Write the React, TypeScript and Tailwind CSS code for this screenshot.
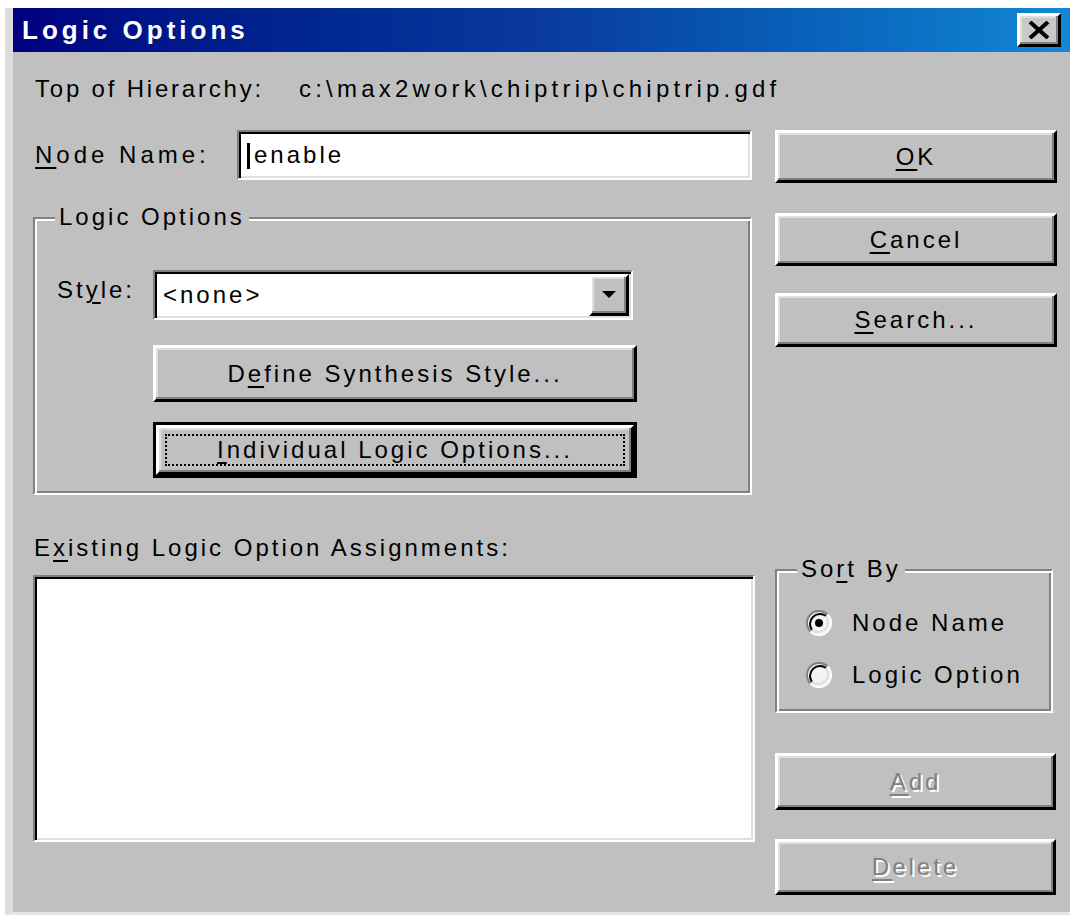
import React from 'react'

// classic 3D bevels
const raised =
    'border-[3px] border-t-white border-l-white border-r-black border-b-black shadow-[inset_-2px_-2px_0_#808080,inset_2px_2px_0_#dfdfdf]'
const sunken =
    'border-[2px] border-t-[#808080] border-l-[#808080] border-r-white border-b-white shadow-[inset_2px_2px_0_#000,inset_-2px_-2px_0_#dfdfdf]'
const etched =
    'border-[2px] border-t-[#808080] border-l-[#808080] border-r-white border-b-white shadow-[inset_2px_2px_0_#fff,inset_-2px_-2px_0_#808080]'

const Key = ({ children }: { children: React.ReactNode }) => (
    <span className="underline decoration-[2px] underline-offset-[4px]">{children}</span>
)

interface ButtonProps {
    children: React.ReactNode
    className?: string
    disabled?: boolean
}

const DialogButton = ({ children, className = '', disabled }: ButtonProps) => (
    <button
        type="button"
        className={`${raised} bg-[#c0c0c0] flex items-center justify-center ${className} ${
            disabled ? 'text-[#808080] [text-shadow:2px_2px_0_#ffffff]' : 'text-black'
        }`}
    >
        {children}
    </button>
)

const GroupBox = ({
    label,
    className = '',
    children,
}: {
    label: React.ReactNode
    className?: string
    children: React.ReactNode
}) => (
    <div className={`relative ${etched} ${className}`}>
        <span className="absolute -top-[15px] left-[20px] bg-[#c0c0c0] px-[4px] leading-[26px]">{label}</span>
        {children}
    </div>
)

const Radio = ({ checked, label }: { checked?: boolean; label: string }) => (
    <div className="flex items-center h-[26px]">
        <svg width="26" height="26" viewBox="0 0 26 26" className="shrink-0">
            <circle cx="13" cy="13" r="11" fill="#f4f4f4" />
            <path d="M4.5 21.5 A12 12 0 0 1 21.5 4.5" stroke="#808080" strokeWidth="2" fill="none" />
            <path d="M6 20 A10 10 0 0 1 20 6" stroke="#000000" strokeWidth="2" fill="none" />
            <path d="M21.5 4.5 A12 12 0 0 1 4.5 21.5" stroke="#ffffff" strokeWidth="2" fill="none" />
            <path d="M20 6 A10 10 0 0 1 6 20" stroke="#dfdfdf" strokeWidth="2" fill="none" />
            {checked && <circle cx="13" cy="13" r="4" fill="#000000" />}
        </svg>
        <span className="ml-[20px]">{label}</span>
    </div>
)

export default function App() {
    return (
        <div className="min-h-screen w-[1070px] overflow-hidden bg-white pt-[8px] pl-[5px] font-['Liberation_Sans',Arial,sans-serif] text-[24px] tracking-[3px] text-black">
            <div className="w-[1070px] h-[907px] flex flex-col bg-[#c0c0c0] border-l-[8px] border-l-[#dcdcdc] border-b-[3px] border-b-[#e6e6e6]">
                {/* title bar */}
                <div className="h-[44px] flex items-center bg-linear-to-r from-[#000080] via-[#0a3a9e] to-[#1488d6] pl-[9px] pr-[10px]">
                    <span className="font-bold text-white text-[26px] tracking-[4px]">Logic Options</span>
                    <button
                        type="button"
                        className={`${raised} ml-auto mr-[4px] w-[44px] h-[34px] bg-[#c8c8c8] flex items-center justify-center`}
                    >
                        <svg width="24" height="18" viewBox="0 0 24 18">
                            <path d="M3 1 L21 17 M21 1 L3 17" stroke="#000" strokeWidth="4" />
                        </svg>
                    </button>
                </div>

                <div className="flex flex-col pl-[20px] pt-[24px]">
                    <div className="ml-[2px] leading-[26px] whitespace-nowrap tracking-[2.8px]">
                        Top of Hierarchy:<span className="ml-[35px] tracking-[4.2px]">c:\max2work\chiptrip\chiptrip.gdf</span>
                    </div>

                    <div className="flex mt-[28px]">
                        {/* left column */}
                        <div className="w-[722px] flex flex-col">
                            <div className="flex items-center h-[50px]">
                                <span className="w-[204px] pl-[2px] tracking-[4px]">
                                    <Key>N</Key>ode Name:
                                </span>
                                <div className={`${sunken} bg-white w-[515px] h-[50px] flex items-center pl-[8px]`}>
                                    <span className="w-[3px] h-[26px] bg-black mr-[4px] mt-[2px]" />
                                    <span>enable</span>
                                </div>
                            </div>

                            <GroupBox label="Logic Options" className="w-[719px] h-[278px] mt-[37px] pt-[51px] pl-[22px]">
                                <div className="flex items-center h-[50px]">
                                    <span className="w-[96px] -mt-[10px]">
                                        St<Key>y</Key>le:
                                    </span>
                                    <div className={`${sunken} bg-white w-[480px] h-[50px] flex items-center pl-[8px] pr-[2px]`}>
                                        <span>&lt;none&gt;</span>
                                        <div
                                            className={`${raised} ml-auto w-[40px] h-[42px] bg-[#c0c0c0] flex items-center justify-center`}
                                        >
                                            <svg width="14" height="8" viewBox="0 0 14 8">
                                                <path d="M0 0 H14 L7 7 Z" fill="#000" />
                                            </svg>
                                        </div>
                                    </div>
                                </div>
                                <DialogButton className="ml-[96px] mt-[25px] w-[484px] h-[57px]">
                                    D<Key>e</Key>fine Synthesis Style...
                                </DialogButton>
                                <button
                                    type="button"
                                    className="ml-[96px] mt-[20px] w-[484px] h-[56px] border-[3px] border-black flex"
                                >
                                    <span className={`${raised} flex-1 bg-[#c0c0c0] flex p-[6px]`}>
                                        <span className="flex-1 border-[2px] border-dotted border-black flex items-center justify-center">
                                            <Key>I</Key>ndividual Logic Options...
                                        </span>
                                    </span>
                                </button>
                            </GroupBox>

                            <div className="mt-[40px] ml-[1px] leading-[26px]">
                                E<Key>x</Key>isting Logic Option Assignments:
                            </div>
                            <div className={`${sunken} bg-white w-[722px] h-[267px] mt-[14px]`} />
                        </div>

                        {/* right column */}
                        <div className="ml-[20px] w-[282px] flex flex-col">
                            <DialogButton className="w-[282px] h-[53px]">
                                <Key>O</Key>K
                            </DialogButton>
                            <DialogButton className="w-[282px] h-[53px] mt-[30px]">
                                <Key>C</Key>ancel
                            </DialogButton>
                            <DialogButton className="w-[282px] h-[54px] mt-[27px]">
                                <Key>S</Key>earch...
                            </DialogButton>

                            <GroupBox
                                label={
                                    <>
                                        So<Key>r</Key>t By
                                    </>
                                }
                                className="w-[278px] h-[144px] mt-[222px] pt-[39px] pl-[29px] flex flex-col gap-[26px]"
                            >
                                <Radio checked label="Node Name" />
                                <Radio label="Logic Option" />
                            </GroupBox>

                            <DialogButton disabled className="w-[281px] h-[57px] mt-[40px]">
                                <Key>A</Key>dd
                            </DialogButton>
                            <DialogButton disabled className="w-[281px] h-[56px] mt-[29px]">
                                <Key>D</Key>elete
                            </DialogButton>
                        </div>
                    </div>
                </div>
            </div>
        </div>
    )
}
